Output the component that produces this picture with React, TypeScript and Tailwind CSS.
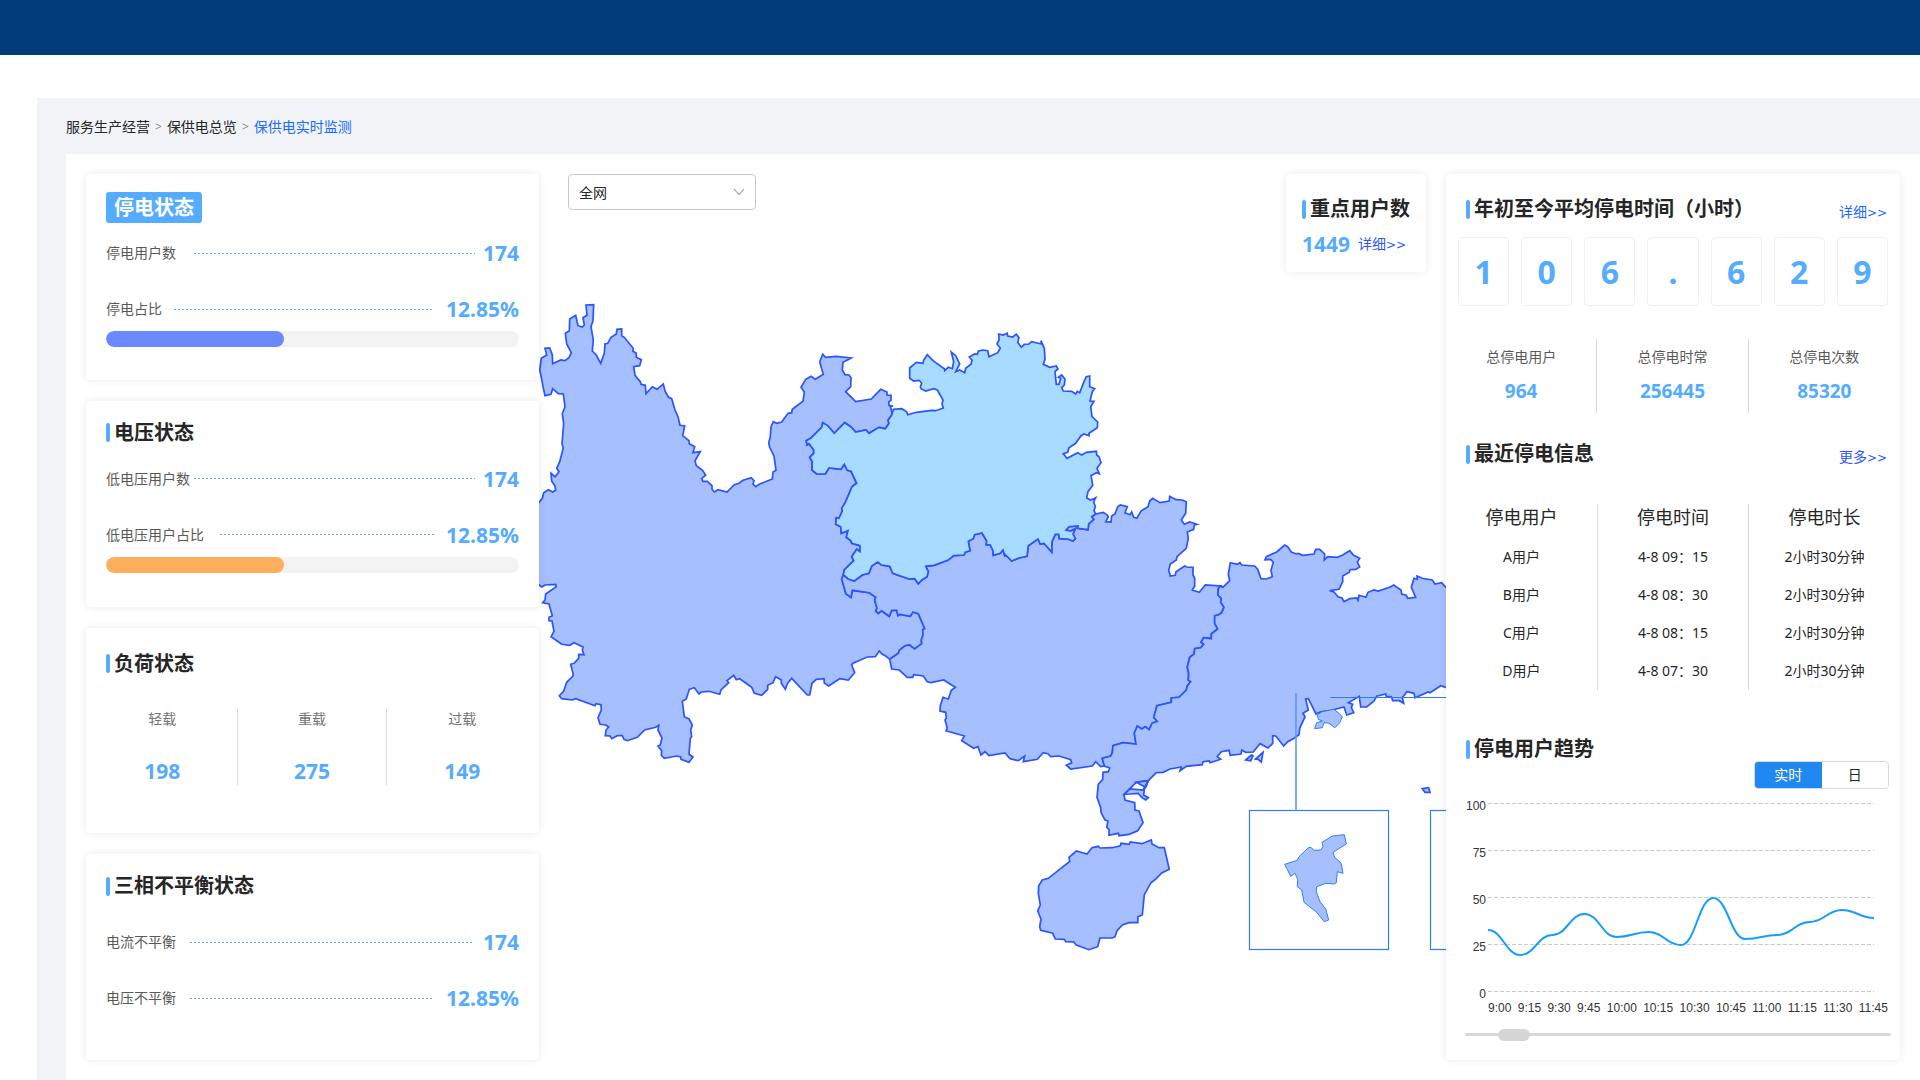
import React, { useState } from "react";

type Point = [number, number];

const MAP_UNIT = 3;

/** Turns a list of "x,y" pairs, measured from a tile's origin, into map points. */
function tile(originX: number, originY: number, pairs: string): Point[] {
  return pairs
    .trim()
    .split(/\s+/)
    .map((pair) => {
      const [x, y] = pair.split(",").map(Number);
      return [originX + x / MAP_UNIT, originY + y / MAP_UNIT] as Point;
    });
}

function outline(...parts: Point[][]): string {
  return parts
    .flat()
    .map(([x, y]) => `${x.toFixed(1)},${y.toFixed(1)}`)
    .join(" ");
}

const back = (points: Point[]): Point[] => [...points].reverse();

/* Borders that two provinces share */
const yunnanGuizhou = [
  ...tile(530, 290, `1090,370 1088,375 1077,391 1080,400 1069,416 1050,412 1020,430 1011,420 980,426 965,410 947,398
    916,430 895,406 881,398 878,412 846,444 832,452 834,465 840,461 854,480 854,490 842,502 850,515 849,540
    863,552 889,552 900,534 936,538 946,523 955,541 966,544 983,580 969,590 950,635 938,655 940,663 930,685
    922,683 920,703`),
  ...tile(530, 520, `935,20 937,40 957,32 952,52 966,62 968,70 993,77 993,95 983,88 968,110 974,122 946,150 943,165`),
];
const yunnanGuangxi = tile(530, 520, `943,165 938,177 951,222 966,232 970,211 1021,218 1040,232 1037,240 1044,265
  1040,273 1048,280 1058,272 1081,289 1088,271 1103,271 1107,287 1113,283 1144,289 1152,276 1168,281 1187,326
  1181,330 1182,345 1177,360 1178,371 1157,387 1141,375 1127,378 1110,392 1109,399 1082,418`);
const guizhouGuangxi = tile(800, 320, `888,583 878,590 884,598 869,612 867,629 836,625 837,618 810,620 801,630
  815,633 829,626 822,642 829,656 822,663 806,657 781,656 779,643 769,643 759,665 758,696 735,670 724,672 717,657
  688,677 684,709 660,714 638,723 617,702 618,710 612,690 604,700 583,706 582,692 574,675 562,674 563,663 549,639
  527,644 523,656 508,664 513,692 499,697 495,705 464,707 448,720 405,736 380,739 388,755 384,770 369,780 358,791
  347,776 330,777 281,760 272,739 247,735 236,726 218,738 210,760 190,765 166,783 148,777 134,765`);
const guangxiGuangdong = tile(880, 480, `1025,318 1018,325 1017,345 1027,355 1025,367 1035,382 1028,398 1018,405
  1007,407 1007,430 1016,447 997,462 997,476 974,473 966,487 974,493 965,503 947,506 945,522 932,532 925,562
  929,580 928,600 935,605 925,618 922,630 900,652 877,654 877,667 834,677 824,712 835,724 819,730 810,749 799,740
  788,747 775,738 766,760 771,792 732,788 702,797 700,818 695,828 670,835 676,858`);

/* Outer borders and coasts */
const yunnan = outline(
  tile(530, 290, `-60,640 28,640 40,625 44,608 58,599 71,606 80,600 78,588 68,574 66,550 78,560 90,545 83,535 92,515
    103,473 99,462 104,400 100,372 108,350 103,312 88,311 71,296 66,313 48,317 42,290 37,262 32,240 37,205 53,195
    48,175 62,174 70,195 71,221 95,210 108,212 120,203 127,188 113,162 109,130 121,123 122,87 140,76 147,107 160,111
    166,105 162,83 174,76 171,45 194,44 192,92 186,110 193,150 190,183 202,195 215,220 226,190 228,162 236,160
    246,142 262,132 264,118 278,117 278,137 286,142 312,174 312,184 322,190 322,202 337,209 332,227 314,230 318,256
    334,275 336,283 349,286 351,311 370,290 384,298 403,282 408,303 418,321 428,326 438,360 447,380 453,406 467,408
    461,437 480,452 481,461 497,470 492,488 514,485 498,512 502,527 520,540 530,555 518,566 522,574 535,574 549,587
    549,598 556,606 567,599 594,606 616,584 630,580 642,571 667,563 675,572 672,582 680,590 692,582 730,567 732,546
    741,541 735,498 722,472 719,458 724,440 726,410 733,395 743,400 758,396 777,370 788,368 790,358 822,334 826,306
    816,292 830,268 846,259 859,268 883,253 872,215 881,193 890,202 922,199 967,204 942,217 940,240 948,254 960,255
    966,263 965,290 950,305 980,335 1027,327 1055,298 1074,306 1074,315 1086,316 1086,330 1079,336 1080,346 1092,348
    1084,350`),
  yunnanGuizhou,
  yunnanGuangxi,
  tile(530, 520, `1071,409 1059,402 1051,393 1039,410 1015,411 972,430 968,435 977,458 958,480 932,476 899,498
    886,489 885,476 862,478 849,490 842,525 835,525 788,475 776,490 769,508 757,490 757,480 740,470 732,488 716,496
    716,508 698,526 676,520 668,502 632,476 622,479 614,466 594,482 599,488 576,510 572,523 540,514 517,516 510,522
    496,503 481,508 472,537 460,544 466,590 480,597 490,615 485,630 488,650 484,655 480,703 492,711 480,727 456,718
    455,711 443,708 406,715 397,706 398,692 387,678 394,675 399,654 387,630 389,616 380,622 347,630 325,652 295,662
    285,658 280,647 265,647 248,656 243,648 229,647 231,630 239,621 230,615 213,613 207,593 217,570 216,554 201,551
    198,557 140,536 130,540 98,536 91,527 104,513 113,487 132,468 132,460 125,433 135,430 149,415 149,403 165,404
    160,390 162,381 135,368 122,376 98,373 66,350 75,334 69,303 60,302 60,292 70,287 60,252 41,248 48,240 50,222
    82,200 80,193 48,195 38,201 28,193 -60,193`)
);

const guizhou = outline(
  tile(800, 320, `283,268 308,266 323,275 326,284 352,277 398,271 410,272 433,264 429,252 432,240 415,210 404,206
    380,213 366,206 364,200 368,190 361,181 344,183 332,175 332,144 352,127 372,130 374,120 385,104 402,122 436,146
    437,152 448,142 460,146 464,125 457,96 470,107 482,132 470,155 482,150 497,158 500,145 516,133 519,121 511,111
    527,102 535,103 538,94 550,90 566,92 570,110 596,98 604,84 594,72 600,60 599,42 612,45 625,40 626,48 641,51
    652,43 660,53 656,67 667,82 676,73 690,72 698,65 727,72 726,62 736,85 738,118 733,133 752,142 772,138 777,147
    768,155 772,193 780,193 785,175 778,172 788,165 798,178 796,195 788,203 793,213 818,214 830,222 835,214 842,218
    855,185 862,170 872,168 872,200 887,206 880,215 873,243 885,244 875,260 879,290 896,306 895,323 870,340 870,347
    855,342 846,347 830,370 810,383 806,397 793,401 804,415 836,398 848,405 862,397 892,394 893,405 900,410 906,428
    894,445 901,461 892,458 876,467 881,496 867,515 863,534 875,540 890,533 884,545 889,560 885,572 890,582`),
  guizhouGuangxi,
  back(yunnanGuizhou)
);

const guangxi = outline(
  back(guizhouGuangxi),
  tile(800, 320, `890,582 913,577 925,585 928,590 920,605 936,606 938,588 948,582 956,560 964,555 985,560 978,578
    993,584 998,576 1004,592 1014,594 1026,573 1047,560 1052,543 1061,535 1083,548 1111,543 1112,529 1131,539
    1150,540 1162,545 1160,580 1147,600 1156,613 1172,606 1194,613 1186,615 1184,628 1165,636 1168,655 1162,685
    1134,710 1132,720 1114,732 1109,750 1114,768 1129,766 1131,755 1157,738 1163,741 1182,742`),
  tile(880, 480, `942,285 947,295 947,318 940,330 961,337 979,315`),
  guangxiGuangdong,
  tile(880, 480, `665,860 650,845 640,858 575,867 562,856 578,848 575,839 540,828 515,830 508,822 493,818 475,838
    433,845 437,828 418,842 393,836 378,819 330,827 318,815 306,825 297,800 284,805 248,782 256,768 201,752 205,745
    198,720 202,715 200,697 183,693 184,677 192,652 208,657 217,631 229,622 194,600 156,608 145,605 133,588 104,584
    101,592 85,592 61,570 38,567`),
  back(yunnanGuangxi)
);

const guangdong = outline(
  tile(1180, 530, `125,168 131,172 152,152 148,133 154,98 175,103 183,98 188,105 227,108 236,118 246,146 262,147
    280,140 276,120 283,97 275,88 258,89 262,80 293,66 317,45 326,50 337,66 350,71 360,71 371,76 405,72 410,58
    422,58 437,72 436,90 446,80 475,82 490,76 512,62 524,76 542,85 535,96 542,111 530,118 513,119 511,127 491,138
    491,155 480,178 452,182 465,186 477,200 489,204 495,215 512,206 533,204 537,211 540,196 561,202 567,187 585,180
    598,183 634,171 644,165 666,180 668,192 682,196 686,205 710,202 697,172 705,145 715,148 714,138 730,145 760,150
    768,162 788,158 800,172 900,180 900,472 800,472 785,467 753,488 748,486 708,503 705,490 684,485 670,503 674,520
    660,512 641,512 637,500 622,500 620,492 593,499 585,513 563,531 545,531 541,499 508,518 521,523 517,532 524,548
    503,555 495,531 460,540 425,545 411,552 388,506 380,507 388,540 372,550 378,560 362,595 360,614 345,625 326,635
    314,648 290,618 281,617 281,640 267,654 243,641 223,666 200,667 188,660 186,672 154,676 150,661 127,665 115,680
    125,688 93,698 91,693 72,695 70,704 22,709 3,722 7,711`),
  tile(1020, 740, `453,87 432,97 412,98 388,122 352,127 315,163 318,180 347,188 348,210 360,213 372,248 356,272
    330,283 300,287 298,280 270,286 270,268 263,262 267,243 258,240 246,217 245,203 234,172 238,133 251,118 252,97
    268,95 272,84`),
  back(guangxiGuangdong)
);

const hainan = outline(
  tile(1020, 740, `150,352 172,333 204,342 219,323 238,319 243,324 280,323 304,317 306,310 330,313 334,306 369,311
    397,300 399,312 420,323 436,323 451,388 428,399 412,416 396,428 376,464 370,525 357,530 356,548 330,548 310,555
    294,572 288,590 280,594 243,594 236,620 210,629 172,615 164,606 140,605 136,598 109,597 101,580 65,571 62,560
    66,537 56,513 64,495 58,460 59,437 70,420 88,415 152,364`)
);

const islets = [
  outline(tile(1020, 740, `388,122 352,127 380,142`)),
  outline(tile(1020, 740, `316,163 333,147 372,150 388,122 376,148 374,165 388,173 380,180 368,172 358,160 333,162`)),
  outline(tile(1020, 740, `680,60 697,45 702,47 695,62`)),
  outline(tile(1020, 740, `710,57 732,37 727,66 718,58`)),
  outline(tile(1020, 740, `1210,146 1229,143 1233,157 1218,157`)),
];

const hongKong = outline(
  tile(1180, 530, `415,555 430,545 465,538 480,550 490,560 482,578 468,593 450,580 435,578 430,593 407,596 413,578
    430,573 418,568`)
);

const guangzhou = outline(
  tile(1020, 740, `797,373 835,361 840,350 868,323 875,322 886,331 905,330 912,320 909,307 940,288 976,284 982,312
    942,337 947,352 967,370 972,400 955,395 952,428 946,432 920,430 893,440 892,455 903,485 920,507 929,540 916,545
    893,517 855,487 848,450 835,440 836,418 828,400 815,409 803,385`)
);

function RegionMap() {
  return (
    <svg
      viewBox="540 272 907 788"
      preserveAspectRatio="xMaxYMid slice"
      className="block min-h-0 w-full flex-1"
      role="img"
      aria-label="南方电网地图"
    >
      <g fill="#a6bfff" stroke="#2b53ff" strokeWidth="1.7" strokeLinejoin="miter">
        <polygon points={yunnan} />
        <polygon points={guangxi} />
        <polygon points={guangdong} />
        <polygon points={hainan} />
        <polygon points={guizhou} fill="#a7dbff" />
        {islets.map((points) => (
          <polygon key={points} points={points} />
        ))}
      </g>
      <g fill="#a6bfff" stroke="#2f80f5" strokeWidth="1">
        <polygon points={hongKong} />
        <polygon points={guangzhou} />
      </g>
      <g fill="none" stroke="#2f7df6" strokeWidth="1.2">
        <rect x="1250.5" y="810.5" width="139" height="139" />
        <rect x="1431.5" y="810.5" width="139" height="139" />
        <path d="M1297 693V811" stroke="#5b97ff" strokeWidth="1.6" />
        <path d="M1331.500 697.500H1447" />
      </g>
    </svg>
  );
}

function Card({ className, children }: { className: string; children: React.ReactNode }) {
  return (
    <section className={`relative z-10 rounded bg-white shadow-[0_0_9px_rgba(0,0,0,0.09)] ${className}`}>
      {children}
    </section>
  );
}

function Title({ children }: { children: React.ReactNode }) {
  return (
    <h2 className="flex h-7 items-center gap-1 text-xl leading-7 font-bold whitespace-nowrap text-[#262626]">
      <span className="h-[19px] w-1 rounded-xs bg-[#55acff]" />
      {children}
    </h2>
  );
}

function MoreLink({ href, tone, children }: { href: string; tone: string; children: React.ReactNode }) {
  return (
    <a href={href} className={`text-sm whitespace-nowrap ${tone}`}>
      {children}
      <span className="font-['DejaVu_Sans',sans-serif] text-xs">&gt;&gt;</span>
    </a>
  );
}

function Metric({ label, value, line }: { label: string; value: string; line: string }) {
  return (
    <div className="flex h-7 items-center">
      <span className="text-sm whitespace-nowrap text-[#595959]">{label}</span>
      <span
        className={`h-px flex-1 bg-[repeating-linear-gradient(to_right,#55acff_0_2px,transparent_2px_4px)] ${line}`}
      />
      <span className="text-[21px] leading-7 font-bold text-[#55acff]">{value}</span>
    </div>
  );
}

function Progress({ tone }: { tone: string }) {
  return (
    <div className="mt-2 h-4 overflow-hidden rounded-full bg-[#f3f3f3]">
      <div className={`h-full w-[43%] rounded-full ${tone}`} />
    </div>
  );
}

const load = [
  { label: "轻载", value: "198" },
  { label: "重载", value: "275" },
  { label: "过载", value: "149" },
];

const totals = [
  { label: "总停电用户", value: "964" },
  { label: "总停电时常", value: "256445" },
  { label: "总停电次数", value: "85320" },
];

const outages = [
  ["A用户", "4-8 09：15", "2小时30分钟"],
  ["B用户", "4-8 08：30", "2小时30分钟"],
  ["C用户", "4-8 08：15", "2小时30分钟"],
  ["D用户", "4-8 07：30", "2小时30分钟"],
];

const times = ["9:00", "9:15", "9:30", "9:45", "10:00", "10:15", "10:30", "10:45", "11:00", "11:15", "11:30", "11:45"];

const trend = [127, 152, 132, 111, 134, 129, 142, 95, 136, 132, 119, 107, 115];

function trendPath() {
  const step = 385 / (trend.length - 1);
  return trend
    .map((y, i) => {
      if (i === 0) return `M0 ${y}`;
      const x0 = (i - 1) * step;
      const x1 = i * step;
      return `C${x0 + step * 0.45} ${trend[i - 1]} ${x1 - step * 0.45} ${y} ${x1} ${y}`;
    })
    .join("");
}

function TrendChart() {
  return (
    <div className="mr-3 ml-5 font-['Liberation_Sans',sans-serif] text-xs leading-[14px] text-[#333]">
      <div className="flex gap-0.5 pr-[14px]">
        <div className="flex h-[202px] w-5 flex-col justify-between text-right">
          <span>100</span>
          <span>75</span>
          <span>50</span>
          <span>25</span>
          <span>0</span>
        </div>
        <svg
          viewBox="0 0 385 190"
          preserveAspectRatio="none"
          className="mt-1 h-[190px] min-w-0 flex-1"
          role="img"
          aria-label="停电用户趋势"
        >
          {[0, 47, 94, 141, 188].map((y) => (
            <path key={y} d={`M0 ${y + 0.5}H385`} stroke="#c9c9c9" strokeDasharray="4 2" />
          ))}
          <path d={trendPath()} fill="none" stroke="#149cff" strokeWidth="2" />
        </svg>
      </div>
      <div className="ml-[22px] flex justify-between">
        {times.map((time) => (
          <span key={time}>{time}</span>
        ))}
      </div>
    </div>
  );
}

function LeftColumn() {
  return (
    <div className="grid w-[453px] shrink-0 auto-rows-fr gap-[21px]">
      <Card className="px-5 pt-[18px]">
        <h2 className="mb-4 flex h-[31px] w-fit items-center rounded-[3px] bg-[#55acff] px-2 pt-px text-xl font-bold text-white">
          停电状态
        </h2>
        <Metric label="停电用户数" value="174" line="ml-[18px] mr-2" />
        <div className="mt-7">
          <Metric label="停电占比" value="12.85%" line="ml-3 mr-3" />
        </div>
        <Progress tone="bg-[#6b89ff]" />
      </Card>
      <Card className="px-5 pt-[18px]">
        <Title>电压状态</Title>
        <div className="mt-[18px] flex flex-col gap-7">
          <Metric label="低电压用户数" value="174" line="ml-1 mr-2" />
          <Metric label="低电压用户占比" value="12.85%" line="ml-4 mr-3" />
        </div>
        <Progress tone="bg-[#ffae5e]" />
      </Card>
      <Card className="px-5 pt-[22px]">
        <Title>负荷状态</Title>
        <dl className="-mx-[18px] mt-[31px] grid grid-cols-3 divide-x divide-[#d9d9d9]">
          {load.map((item) => (
            <div key={item.label} className="flex h-[76px] flex-col items-center justify-between">
              <dt className="text-sm text-[#737373]">{item.label}</dt>
              <dd className="text-[21px] leading-7 font-bold text-[#55acff]">{item.value}</dd>
            </div>
          ))}
        </dl>
      </Card>
      <Card className="px-5 pt-[18px]">
        <Title>三相不平衡状态</Title>
        <div className="mt-7 flex flex-col gap-7">
          <Metric label="电流不平衡" value="174" line="ml-[14px] mr-[10px]" />
          <Metric label="电压不平衡" value="12.85%" line="ml-[14px] mr-3" />
        </div>
      </Card>
    </div>
  );
}

function MapColumn() {
  return (
    <div className="flex min-w-0 flex-1 flex-col">
      <div className="flex items-start justify-between pr-5 pl-[29px]">
        <div className="relative">
          <select
            aria-label="区域"
            className="h-9 w-[188px] appearance-none rounded border border-[#c8c8c8] bg-white px-[10px] pt-0.5 text-sm text-[#262626]"
          >
            <option>全网</option>
          </select>
          <svg viewBox="0 0 12 8" className="pointer-events-none absolute top-[14px] right-[11px] h-2 w-3">
            <path d="M1 1L6 6.500L11 1" fill="none" stroke="#999" strokeWidth="1.1" />
          </svg>
        </div>
        <Card className="px-4 pt-[21px] pb-[14px]">
          <Title>重点用户数</Title>
          <div className="mt-[7px] flex h-7 items-center gap-2">
            <span className="text-[21px] leading-7 font-bold text-[#55acff]">1449</span>
            <MoreLink href="#key-users" tone="text-[#2f54ff]">
              详细
            </MoreLink>
          </div>
        </Card>
      </div>
      <RegionMap />
    </div>
  );
}

function RightColumn() {
  const [mode, setMode] = useState("实时");
  return (
    <Card className="flex w-[454px] shrink-0 flex-col pt-[21px]">
      <div className="flex items-center justify-between pr-[13px] pl-5">
        <Title>年初至今平均停电时间（小时）</Title>
        <span className="pt-1">
          <MoreLink href="#average" tone="text-[#1a6bff]">
            详细
          </MoreLink>
        </span>
      </div>
      <div className="mx-3 mt-[14px] grid grid-cols-7 gap-3">
        {["1", "0", "6", ".", "6", "2", "9"].map((digit, i) => (
          <span
            key={i}
            className="flex h-[69px] items-center justify-center rounded border border-[#f0f0f0] text-[32px] font-bold text-[#55acff]"
          >
            {digit}
          </span>
        ))}
      </div>
      <dl className="mt-8 grid grid-cols-3 divide-x divide-[#d9d9d9]">
        {totals.map((item) => (
          <div key={item.label} className="flex h-[75px] flex-col items-center gap-[10px] pt-[9px]">
            <dt className="text-sm text-[#595959]">{item.label}</dt>
            <dd className="text-[19px] leading-7 font-bold text-[#55acff]">{item.value}</dd>
          </div>
        ))}
      </dl>
      <div className="mt-[27px] flex items-center justify-between pr-[13px] pl-5">
        <Title>最近停电信息</Title>
        <span className="pt-1">
          <MoreLink href="#outages" tone="text-[#2f54ff]">
            更多
          </MoreLink>
        </span>
      </div>
      <table className="mt-9 w-full table-fixed text-center text-sm text-[#262626]">
        <thead>
          <tr className="h-[34px] text-lg">
            {["停电用户", "停电时间", "停电时长"].map((name) => (
              <th
                key={name}
                scope="col"
                className="border-r border-[#d9d9d9] p-0 pb-[7px] leading-[27px] font-normal last:border-r-0"
              >
                {name}
              </th>
            ))}
          </tr>
        </thead>
        <tbody>
          {outages.map((row) => (
            <tr key={row[0]} className="h-[38px]">
              {row.map((cell) => (
                <td key={cell} className="border-r border-[#d9d9d9] p-0 last:border-r-0">
                  {cell}
                </td>
              ))}
            </tr>
          ))}
        </tbody>
      </table>
      <div className="mt-[45px] pl-5">
        <Title>停电用户趋势</Title>
      </div>
      <div className="-mt-0.5 mr-[11px] mb-[10px] flex h-7 w-[135px] self-end overflow-hidden rounded border border-[#d9d9d9]">
        {["实时", "日"].map((name) => (
          <button
            key={name}
            type="button"
            aria-pressed={mode === name}
            onClick={() => setMode(name)}
            className={`flex-1 text-sm ${mode === name ? "bg-[#1f88f1] text-white" : "bg-white text-[#262626]"}`}
          >
            {name}
          </button>
        ))}
      </div>
      <TrendChart />
      <input
        type="range"
        aria-label="时间范围"
        min={0}
        max={120}
        defaultValue={10}
        className="mt-[13px] mr-[9px] ml-[19px] h-3 appearance-none bg-transparent [&::-webkit-slider-runnable-track]:h-[3px] [&::-webkit-slider-runnable-track]:rounded-full [&::-webkit-slider-runnable-track]:bg-[#d9d9d9] [&::-webkit-slider-thumb]:-mt-1 [&::-webkit-slider-thumb]:h-3 [&::-webkit-slider-thumb]:w-8 [&::-webkit-slider-thumb]:appearance-none [&::-webkit-slider-thumb]:rounded-full [&::-webkit-slider-thumb]:bg-[#d6d6d6]"
      />
    </Card>
  );
}

export default function App() {
  return (
    <div className="flex min-h-screen flex-col bg-white font-['Noto_Sans','Noto_Sans_CJK_SC',sans-serif]">
      <header className="h-[55px] bg-[#003c7a]" />
      <div className="mt-[43px] ml-[37px] flex flex-1 flex-col bg-[#f1f3f7] pl-[29px]">
        <nav aria-label="面包屑" className="flex h-14 items-center gap-[5px] pt-[2px] text-sm text-[#262626]">
          <a href="#service">服务生产经营</a>
          <span className="text-xs text-[#8c8c8c]">&gt;</span>
          <a href="#overview">保供电总览</a>
          <span className="text-xs text-[#8c8c8c]">&gt;</span>
          <a href="#monitor" aria-current="page" className="text-[#1a6bff]">
            保供电实时监测
          </a>
        </nav>
        <main className="flex flex-1 bg-white p-5">
          <LeftColumn />
          <MapColumn />
          <RightColumn />
        </main>
      </div>
    </div>
  );
}
